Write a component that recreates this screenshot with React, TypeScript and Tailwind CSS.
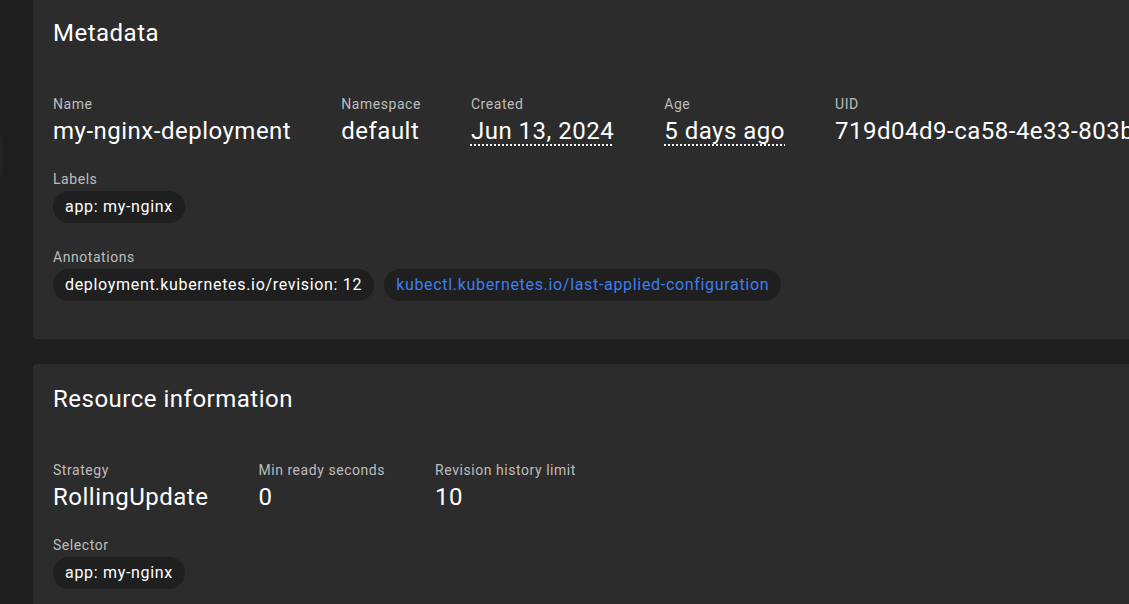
import React from "react"

type Field = { label: string; value: string; dotted?: boolean }

function Chip({ text, link }: { text: string; link?: boolean }) {
    return (
        <span className={`inline-flex h-8 items-center whitespace-nowrap rounded-full bg-[#1f1f1f] px-3 text-base tracking-[0.68px] ${link ? 'text-[#3d7ef0]' : 'text-white'}`}>
            {text}
        </span>
    )
}

function FieldRow({ fields }: { fields: Field[] }) {
    return (
        <div className="flex gap-[50px]">
            {fields.map((f) => (
                <div key={f.label} className="flex shrink-0 flex-col">
                    <span className="text-sm leading-5 tracking-[0.55px] text-[#bdbdbd]">{f.label}</span>
                    <span
                        className={`mt-px whitespace-nowrap text-2xl leading-8 tracking-[0.5px] text-white ${f.dotted ? 'underline decoration-dotted decoration-2 underline-offset-[5px]' : ''}`}
                    >
                        {f.value}
                    </span>
                </div>
            ))}
        </div>
    )
}

function ChipGroup({ label, chips, className }: { label: string; chips: { text: string; link?: boolean }[]; className?: string }) {
    return (
        <div className={`flex flex-col ${className ?? 'mt-[22px]'}`}>
            <span className="text-sm leading-5 tracking-[0.55px] text-[#bdbdbd]">{label}</span>
            <div className="mt-[2px] flex gap-2.5">
                {chips.map((c) => (
                    <Chip key={c.text} text={c.text} link={c.link} />
                ))}
            </div>
        </div>
    )
}

function Card({ title, children, className }: { title: string; children: React.ReactNode; className?: string }) {
    return (
        <section className={`shrink-0 overflow-hidden rounded-l-[4px] bg-[#2c2c2c] px-5 pt-[19px] ${className ?? ''}`}>
            <h2 className="whitespace-nowrap text-2xl leading-8 tracking-[0.5px] text-white">{title}</h2>
            <div className="mt-[45px]">{children}</div>
        </section>
    )
}

export default function App() {
    return (
        <div
            className="flex h-[604px] w-[1129px] overflow-hidden bg-[#1e1e1e]"
            style={{ fontFamily: 'Roboto, "Noto Sans", sans-serif' }}
        >
            <aside className="w-[33px] shrink-0">
                <div className="mt-[136px] h-[40px] w-[3px] rounded-r bg-[#232323]" />
            </aside>
            <main className="-mt-[2px] flex min-w-0 flex-1 flex-col">
                <Card title="Metadata" className="pb-[38px]">
                    <FieldRow
                        fields={[
                            { label: 'Name', value: 'my-nginx-deployment' },
                            { label: 'Namespace', value: 'default' },
                            { label: 'Created', value: 'Jun 13, 2024', dotted: true },
                            { label: 'Age', value: '5 days ago', dotted: true },
                            { label: 'UID', value: '719d04d9-ca58-4e33-803b-5b2a6e8f1c42' },
                        ]}
                    />
                    <ChipGroup label="Labels" chips={[{ text: 'app: my-nginx' }]} />
                    <ChipGroup
                        label="Annotations"
                        className="mt-[24px]"
                        chips={[
                            { text: 'deployment.kubernetes.io/revision: 12' },
                            { text: 'kubectl.kubernetes.io/last-applied-configuration', link: true },
                        ]}
                    />
                </Card>
                <Card title="Resource information" className="mt-[25px] pb-[38px]">
                    <FieldRow
                        fields={[
                            { label: 'Strategy', value: 'RollingUpdate' },
                            { label: 'Min ready seconds', value: '0' },
                            { label: 'Revision history limit', value: '10' },
                        ]}
                    />
                    <ChipGroup label="Selector" chips={[{ text: 'app: my-nginx' }]} />
                </Card>
            </main>
        </div>
    )
}
